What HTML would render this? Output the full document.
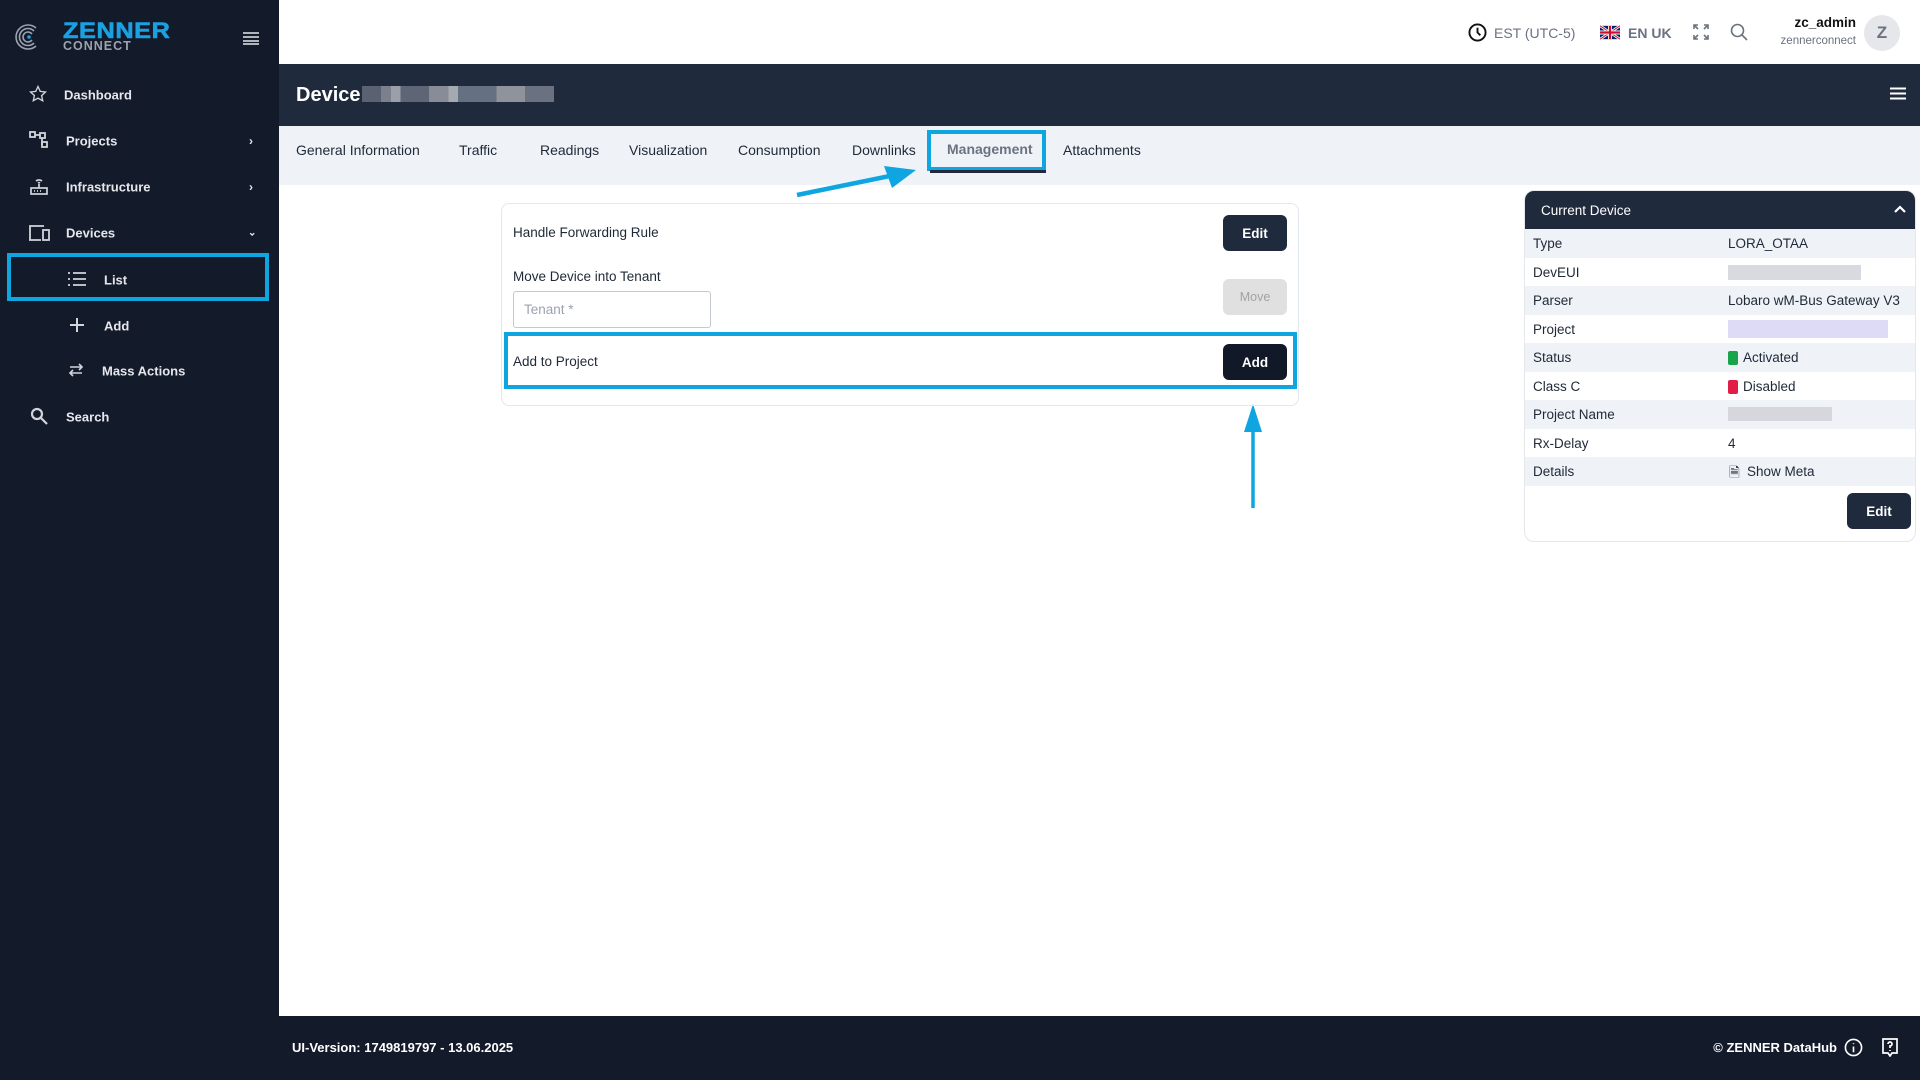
<!DOCTYPE html>
<html><head><meta charset="utf-8"><style>
*{box-sizing:border-box;margin:0;padding:0}
body{width:1920px;height:1080px;position:relative;overflow:hidden;font-family:"Liberation Sans",sans-serif;background:#fff;color:#1f2937}
.abs{position:absolute}
.side{left:0;top:0;width:279px;height:1080px;background:#131a2a}
.nav{position:absolute;color:#e5e7eb;font-size:13px;font-weight:bold;transform:translateY(-50%)}
.ico{position:absolute;transform:translate(-50%,-50%)}
.tab{position:absolute;top:150px;transform:translateY(-50%);font-size:14px;color:#1f2937}
.row{position:absolute;left:1525px;width:390px;height:28.5px;font-size:13.5px;line-height:30px}
.row span{position:absolute}
.btn{position:absolute;border-radius:6px;color:#fff;font-weight:bold;font-size:13.5px;display:flex;align-items:center;justify-content:center}
</style></head><body>
<div class="abs side"></div>
<svg class="abs" style="left:14px;top:22px" width="30" height="30" viewBox="0 0 30 30" fill="none" stroke="#9ca3af" stroke-width="1.6"><path d="M22 6A12 12 0 1 0 22 24"/><path d="M20 9A8.5 8.5 0 1 0 20 21"/><path d="M18 12A5 5 0 1 0 18 18"/><circle cx="15" cy="15" r="1.8" fill="#1ba1e2" stroke="none"/></svg>
<div class="abs" style="left:63px;top:20px;font-size:22px;font-weight:900;color:#1ba1e2;letter-spacing:0.5px;line-height:22px;transform:scaleX(1.15);transform-origin:left;-webkit-text-stroke:0.6px #1ba1e2">ZENNER</div>
<div class="abs" style="left:63px;top:40px;font-size:12.5px;font-weight:bold;color:#9ca3af;letter-spacing:1px;line-height:13px">CONNECT</div>
<svg class="abs" style="left:243px;top:31px" width="16" height="14" viewBox="0 0 16 14" stroke="#e5e7eb"><path d="M0 2H16M0 6H16M0 10H16M0 13H16" stroke-width="1.6"/></svg>

<svg class="ico" style="left:38px;top:94px" width="18" height="18" viewBox="0 0 24 24" fill="none" stroke="#d1d5db" stroke-width="1.8"><path d="M12 2l3 6.5 7 .8-5.2 4.8 1.5 7L12 17.5 5.7 21l1.5-7L2 9.3l7-.8z"/></svg>
<div class="nav" style="left:64px;top:95px">Dashboard</div>
<svg class="ico" style="left:39px;top:140px" width="20" height="18" viewBox="0 0 20 18" fill="none" stroke="#d1d5db" stroke-width="1.8"><rect x="1" y="1" width="5" height="5"/><rect x="11" y="2" width="5" height="5"/><rect x="13" y="11" width="5" height="5"/><path d="M6 4h5M13 7v7"/></svg>
<div class="nav" style="left:66px;top:141px">Projects</div>
<div class="nav" style="left:249px;top:141px;font-size:12px">›</div>
<svg class="ico" style="left:39px;top:186px" width="20" height="20" viewBox="0 0 20 20" fill="none" stroke="#d1d5db" stroke-width="1.7"><path d="M7 5a5 5 0 0 1 6 0M9 7a2 2 0 0 1 2 0M10 8v4"/><rect x="2" y="12" width="16" height="6"/><path d="M5 15h1M8 15h1M11 15h1"/></svg>
<div class="nav" style="left:66px;top:187px">Infrastructure</div>
<div class="nav" style="left:249px;top:187px;font-size:12px">›</div>
<svg class="ico" style="left:39px;top:233px" width="22" height="18" viewBox="0 0 22 18" fill="none" stroke="#d1d5db" stroke-width="1.8"><path d="M2 16V2h14M1 16h12"/><rect x="15" y="6" width="6" height="10"/></svg>
<div class="nav" style="left:66px;top:233px">Devices</div>
<div class="nav" style="left:248px;top:233px;font-size:10px">⌄</div>
<div class="abs" style="left:7px;top:253px;width:262px;height:48px;border:4px solid #0ea5e0"></div>
<svg class="ico" style="left:77px;top:279px" width="18" height="14" viewBox="0 0 18 14" stroke="#d1d5db" stroke-width="1.8"><path d="M0 1h2M5 1h13M0 7h2M5 7h13M0 13h2M5 13h13"/></svg>
<div class="nav" style="left:104px;top:280px">List</div>
<svg class="ico" style="left:77px;top:325px" width="14" height="14" viewBox="0 0 14 14" stroke="#d1d5db" stroke-width="2"><path d="M7 0v14M0 7h14"/></svg>
<div class="nav" style="left:104px;top:326px">Add</div>
<svg class="ico" style="left:76px;top:370px" width="16" height="16" viewBox="0 0 16 16" fill="none" stroke="#d1d5db" stroke-width="1.6"><path d="M2 5h12M11 2l3 3-3 3M14 11H2M5 8l-3 3 3 3"/></svg>
<div class="nav" style="left:102px;top:371px">Mass Actions</div>
<svg class="ico" style="left:39px;top:416px" width="18" height="18" viewBox="0 0 18 18" fill="none" stroke="#d1d5db" stroke-width="2.2"><circle cx="7" cy="7" r="5"/><path d="M11 11l6 6"/></svg>
<div class="nav" style="left:66px;top:417px">Search</div>

<svg class="abs" style="left:1468px;top:23px" width="19" height="19" viewBox="0 0 20 20" fill="none" stroke="#111" stroke-width="2"><circle cx="10" cy="10" r="8.5"/><path d="M10 5v5l3 3"/></svg>
<div class="abs" style="left:1494px;top:25px;font-size:14px;color:#6b7280">EST (UTC-5)</div>
<svg class="abs" style="left:1600px;top:25px" width="20" height="15" viewBox="0 0 60 40"><rect width="60" height="40" fill="#012169"/><path d="M0 0L60 40M60 0L0 40" stroke="#fff" stroke-width="8"/><path d="M0 0L60 40M60 0L0 40" stroke="#C8102E" stroke-width="3"/><path d="M30 0v40M0 20h60" stroke="#fff" stroke-width="12"/><path d="M30 0v40M0 20h60" stroke="#C8102E" stroke-width="7"/></svg>
<div class="abs" style="left:1628px;top:25px;font-size:14px;color:#6b7280;font-weight:bold">EN UK</div>
<svg class="abs" style="left:1693px;top:24px" width="16" height="16" viewBox="0 0 16 16" fill="none" stroke="#6b7280" stroke-width="1.6"><path d="M1 5V1h4M11 1h4v4M15 11v4h-4M5 15H1v-4M1 1l4 4M15 1l-4 4M15 15l-4-4M1 15l4-4"/></svg>
<svg class="abs" style="left:1730px;top:23px" width="18" height="18" viewBox="0 0 18 18" fill="none" stroke="#6b7280" stroke-width="1.6"><circle cx="7.5" cy="7.5" r="6"/><path d="M12 12l5 5"/></svg>
<div class="abs" style="left:1700px;top:15px;width:156px;text-align:right;font-size:13.5px;color:#111;font-weight:bold">zc_admin</div>
<div class="abs" style="left:1700px;top:35px;width:156px;text-align:right;font-size:11.5px;color:#6b7280">zennerconnect</div>
<div class="abs" style="left:1864px;top:15px;width:36px;height:36px;border-radius:50%;background:#e5e7eb;color:#6b7280;font-size:17px;font-weight:bold;text-align:center;line-height:36px">Z</div>

<div class="abs" style="left:279px;top:64px;width:1641px;height:62px;background:#1f2a3c"></div>
<div class="abs" style="left:296px;top:84px;font-size:20px;color:#fff;font-weight:bold">Device</div>
<div class="abs" style="left:362px;top:86px;width:192px;height:16px;background:linear-gradient(90deg,#5a6272 0 10%,#7b808c 10% 15%,#9aa0a8 15% 20%,#5d6576 20% 35%,#888c96 35% 45%,#a5a9b0 45% 50%,#677080 50% 70%,#8f949c 70% 85%,#6a7282 85% 100%)"></div>
<svg class="abs" style="left:1890px;top:87px" width="16" height="13" viewBox="0 0 16 13" stroke="#fff" stroke-width="2"><path d="M0 1.5h16M0 6.5h16M0 11.5h16"/></svg>

<div class="abs" style="left:279px;top:126px;width:1641px;height:59px;background:#eff3f8"></div>
<div class="tab" style="left:296px">General Information</div>
<div class="tab" style="left:459px">Traffic</div>
<div class="tab" style="left:540px">Readings</div>
<div class="tab" style="left:629px">Visualization</div>
<div class="tab" style="left:738px">Consumption</div>
<div class="tab" style="left:852px">Downlinks</div>
<div class="tab" style="left:947px;top:149px;color:#6b7280;font-weight:bold">Management</div>
<div class="tab" style="left:1063px">Attachments</div>
<div class="abs" style="left:927px;top:130px;width:119px;height:41px;border:4px solid #0ea5e0"></div>
<div class="abs" style="left:930px;top:170px;width:116px;height:3px;background:#1f2a3c"></div>

<svg class="abs" style="left:0;top:0" width="1920" height="1080" viewBox="0 0 1920 1080" fill="#0ea5e0" stroke="#0ea5e0">
<path d="M797 195L890 176" stroke-width="4.5"/><path d="M916 170L884 166L892 188Z" stroke="none"/>
<path d="M1253 508V430" stroke-width="3.5"/><path d="M1253 404L1244 432L1262 432Z" stroke="none"/>
</svg>

<div class="abs" style="left:501px;top:203px;width:798px;height:203px;border:1px solid #e3e8ef;border-radius:8px"></div>
<div class="abs" style="left:513px;top:225px;font-size:13.5px">Handle Forwarding Rule</div>
<div class="btn" style="left:1223px;top:215px;width:64px;height:36px;background:#1f2a3c">Edit</div>
<div class="abs" style="left:513px;top:269px;font-size:13.5px">Move Device into Tenant</div>
<div class="abs" style="left:513px;top:291px;width:198px;height:37px;border:1px solid #c4c8cf;border-radius:3px;font-size:13.5px;color:#9ca3af;padding:10px 10px">Tenant *</div>
<div class="btn" style="left:1223px;top:279px;width:64px;height:36px;background:#e0e0e0;color:#a3a3a3;font-weight:normal;font-size:12.5px">Move</div>
<div class="abs" style="left:504px;top:332px;width:793px;height:57px;border:4px solid #0ea5e0"></div>
<div class="abs" style="left:513px;top:354px;font-size:13.5px">Add to Project</div>
<div class="btn" style="left:1223px;top:344px;width:64px;height:36px;background:#111827">Add</div>

<div class="abs" style="left:1524px;top:190px;width:392px;height:352px;border:1px solid #e5e7eb;border-radius:10px;overflow:hidden">
<div style="height:39px;background:#1f2a3c;color:#fff;font-size:13.5px;line-height:39px;padding-left:16px">Current Device</div>
</div>
<svg class="abs" style="left:1894px;top:205px" width="12" height="8" viewBox="0 0 12 8" fill="none" stroke="#fff" stroke-width="2.2"><path d="M1 7l5-5 5 5"/></svg>
<div class="row" style="top:229px;background:#eff3f8"><span style="left:8px">Type</span><span style="left:203px">LORA_OTAA</span></div>
<div class="row" style="top:257.5px"><span style="left:8px">DevEUI</span><span style="left:203px;top:7px;width:133px;height:15px;background:#d9dadf"></span></div>
<div class="row" style="top:286px;background:#eff3f8"><span style="left:8px">Parser</span><span style="left:203px">Lobaro wM-Bus Gateway V3</span></div>
<div class="row" style="top:314.5px"><span style="left:8px">Project</span><span style="left:203px;top:5px;width:160px;height:18px;background:#dddbf5"></span></div>
<div class="row" style="top:343px;background:#eff3f8"><span style="left:8px">Status</span><span style="left:203px;top:8px;width:10px;height:14px;background:#16a34a;border-radius:2px"></span><span style="left:218px">Activated</span></div>
<div class="row" style="top:371.5px"><span style="left:8px">Class C</span><span style="left:203px;top:8px;width:10px;height:14px;background:#e11d48;border-radius:2px"></span><span style="left:218px">Disabled</span></div>
<div class="row" style="top:400px;background:#eff3f8"><span style="left:8px">Project Name</span><span style="left:203px;top:7px;width:104px;height:14px;background:#d5d7dc"></span></div>
<div class="row" style="top:428.5px"><span style="left:8px">Rx-Delay</span><span style="left:203px">4</span></div>
<div class="row" style="top:457px;background:#eff3f8"><span style="left:8px">Details</span><span style="left:204px;top:1px">🗎</span><span style="left:222px">Show Meta</span></div>
<div class="btn" style="left:1847px;top:493px;width:64px;height:36px;background:#1f2a3c">Edit</div>

<div class="abs" style="left:279px;top:1016px;width:1641px;height:64px;background:#131a2a"></div>
<div class="abs" style="left:292px;top:1040px;font-size:13px;color:#fff;font-weight:bold">UI-Version: 1749819797 - 13.06.2025</div>
<div class="abs" style="left:1690px;top:1040px;width:147px;text-align:right;font-size:13px;color:#fff;font-weight:bold">© ZENNER DataHub</div>
<svg class="abs" style="left:1844px;top:1038px" width="19" height="19" viewBox="0 0 20 20" fill="none" stroke="#fff" stroke-width="1.7"><circle cx="10" cy="10" r="8.5"/><path d="M10 9v6M10 5.5v1"/></svg>
<svg class="abs" style="left:1881px;top:1038px" width="18" height="19" viewBox="0 0 18 19" fill="none" stroke="#fff" stroke-width="1.7"><path d="M2 1h14v14h-5l-2 3-2-3H2z"/><path d="M7 6a2 2 0 1 1 2 2v2M9 12v1"/></svg>
</body></html>
